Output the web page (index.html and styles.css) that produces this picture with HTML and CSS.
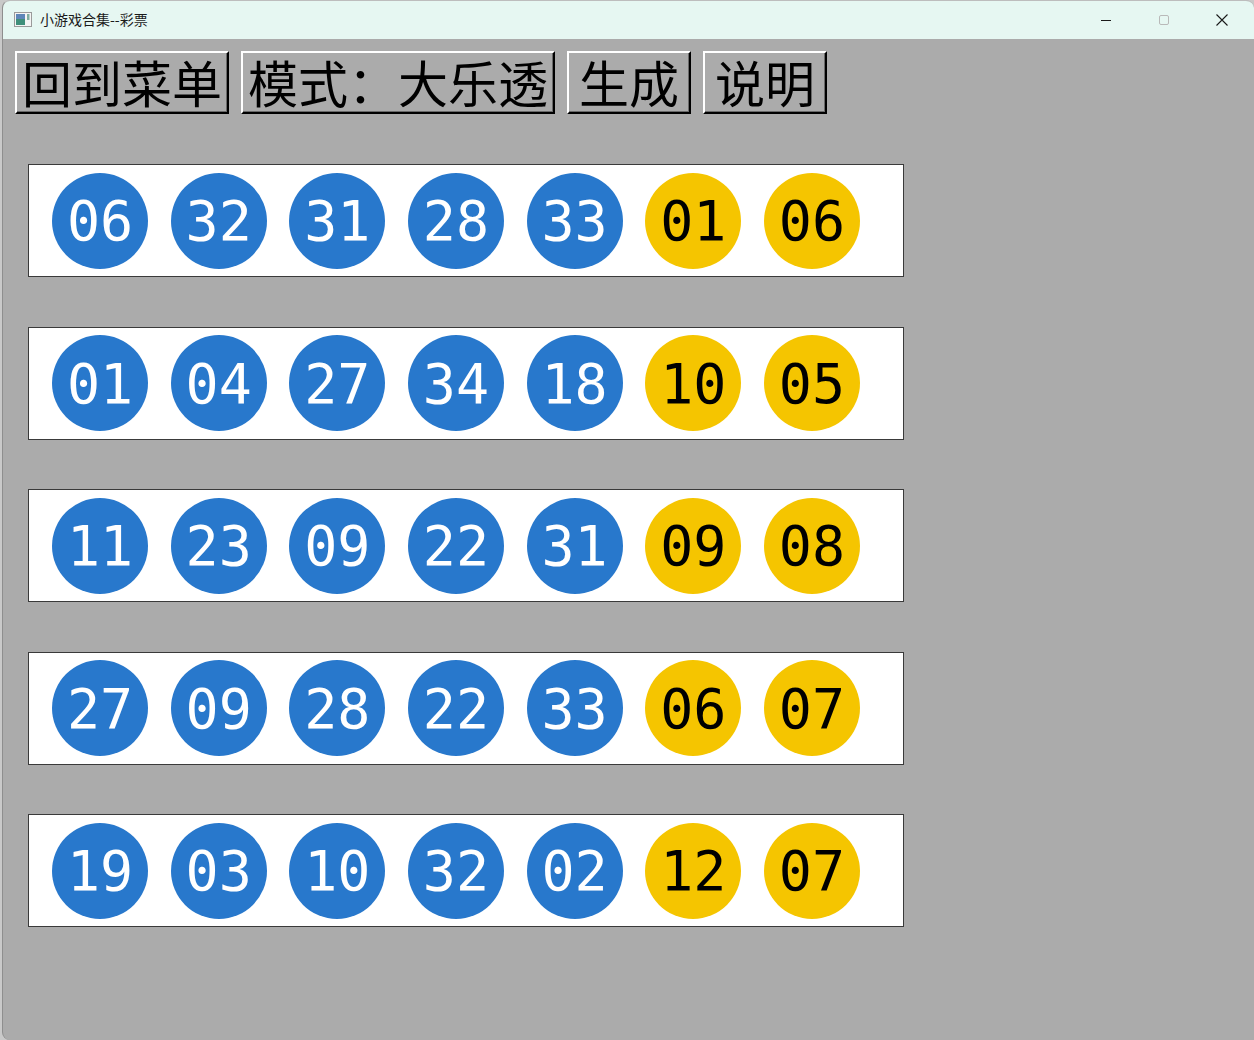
FILE: index.html
```html
<!DOCTYPE html>
<html lang="zh-CN">
<head>
<meta charset="utf-8">
<title>小游戏合集--彩票</title>
<link rel="stylesheet" href="styles.css">
</head>
<body>
<div class="window">
  <div class="titlebar">
    <div class="app-icon">
      <svg width="18" height="15" viewBox="0 0 18 15">
        <rect x="0.5" y="0.5" width="17" height="14" fill="#f4f4f4" stroke="#9a9a9a"/>
        <rect x="2" y="2" width="9" height="11" fill="#3f8f7a"/>
        <rect x="2" y="2" width="9" height="5" fill="#5d86b8"/>
        <rect x="13" y="2" width="2.5" height="6" fill="#7fae9f"/>
      </svg>
    </div>
    <div class="title">小游戏合集--彩票</div>
    <div class="controls">
      <div class="ctl">
        <svg width="12" height="12" viewBox="0 0 12 12"><line x1="1" y1="6.5" x2="11" y2="6.5" stroke="#1a1a1a" stroke-width="1"/></svg>
      </div>
      <div class="ctl">
        <svg width="12" height="12" viewBox="0 0 12 12"><rect x="1.5" y="1.5" width="9" height="9" rx="1.5" fill="none" stroke="#b9b9b9" stroke-width="1"/></svg>
      </div>
      <div class="ctl">
        <svg width="14" height="14" viewBox="0 0 14 14"><path d="M1.5 1.5 L12.5 12.5 M12.5 1.5 L1.5 12.5" stroke="#1a1a1a" stroke-width="1.1"/></svg>
      </div>
    </div>
  </div>
  <div class="content">
    <div class="toolbar">
      <div class="btn">回到菜单</div>
      <div class="btn">模式：大乐透</div>
      <div class="btn">生成</div>
      <div class="btn">说明</div>
    </div>
    <div class="rows">
      <div class="panel">
        <div class="ball blue">06</div><div class="ball blue">32</div><div class="ball blue">31</div><div class="ball blue">28</div><div class="ball blue">33</div><div class="ball yellow">01</div><div class="ball yellow">06</div>
      </div>
      <div class="panel">
        <div class="ball blue">01</div><div class="ball blue">04</div><div class="ball blue">27</div><div class="ball blue">34</div><div class="ball blue">18</div><div class="ball yellow">10</div><div class="ball yellow">05</div>
      </div>
      <div class="panel">
        <div class="ball blue">11</div><div class="ball blue">23</div><div class="ball blue">09</div><div class="ball blue">22</div><div class="ball blue">31</div><div class="ball yellow">09</div><div class="ball yellow">08</div>
      </div>
      <div class="panel">
        <div class="ball blue">27</div><div class="ball blue">09</div><div class="ball blue">28</div><div class="ball blue">22</div><div class="ball blue">33</div><div class="ball yellow">06</div><div class="ball yellow">07</div>
      </div>
      <div class="panel">
        <div class="ball blue">19</div><div class="ball blue">03</div><div class="ball blue">10</div><div class="ball blue">32</div><div class="ball blue">02</div><div class="ball yellow">12</div><div class="ball yellow">07</div>
      </div>
    </div>
  </div>
</div>
</body>
</html>
```

FILE: styles.css
```css
html, body {
  margin: 0;
  padding: 0;
  height: 100%;
}
body {
  background: #c9c9c9;
  overflow: hidden;
}
.window {
  margin-left: 2px;
  height: 1040px;
  box-sizing: border-box;
  border-left: 1px solid #8e8e8e;
  border-top: 1px solid #bdbdbd;
  border-top-left-radius: 8px;
  border-top-right-radius: 8px;
  border-bottom-left-radius: 8px;
  overflow: hidden;
  display: flex;
  flex-direction: column;
  background: #ababab;
}
.titlebar {
  height: 38px;
  flex: none;
  background: #e6f7f2;
  display: flex;
  align-items: center;
  font-family: "Noto Sans CJK SC", "Noto Sans", sans-serif;
}
.app-icon {
  width: 18px;
  height: 15px;
  margin-left: 11px;
  margin-top: -1px;
  display: flex;
}
.title {
  margin-left: 8px;
  font-size: 14px;
  color: #1a1a1a;
  margin-top: -2px;
}
.controls {
  margin-left: auto;
  margin-right: 3px;
  display: flex;
  height: 100%;
}
.ctl {
  width: 58px;
  display: flex;
  align-items: center;
  justify-content: center;
}
.content {
  flex: 1;
  padding: 12px 0 0 12px;
}
.toolbar {
  display: flex;
  gap: 12px;
}
.btn {
  box-sizing: border-box;
  min-width: 124px;
  height: 63px;
  padding: 0 5px;
  text-align: center;
  font-family: "Noto Sans CJK SC", sans-serif;
  font-size: 50px;
  line-height: 57px;
  color: #000;
  background: #ababab;
  border: 2px solid;
  border-color: #ffffff #000000 #000000 #ffffff;
  box-shadow: inset -1px -1px 0 #6a6a6a;
}
.rows {
  margin-top: 50px;
  margin-left: 13px;
  display: flex;
  flex-direction: column;
  gap: 49.5px;
}
.panel {
  box-sizing: border-box;
  width: 876px;
  height: 113px;
  background: #ffffff;
  border: 1px solid #3a3a3a;
  display: flex;
  align-items: center;
  padding-left: 23px;
  gap: 22.67px;
}
.ball {
  width: 96px;
  height: 96px;
  border-radius: 50%;
  display: flex;
  align-items: center;
  justify-content: center;
  font-family: "DejaVu Sans Mono", monospace;
  font-variant-numeric: slashed-zero;
  font-size: 55px;
  line-height: 1;
  padding-top: 2px;
  box-sizing: border-box;
  flex: none;
}
.blue {
  background: #2878cc;
  color: #ffffff;
}
.yellow {
  background: #f5c500;
  color: #000000;
}
```
